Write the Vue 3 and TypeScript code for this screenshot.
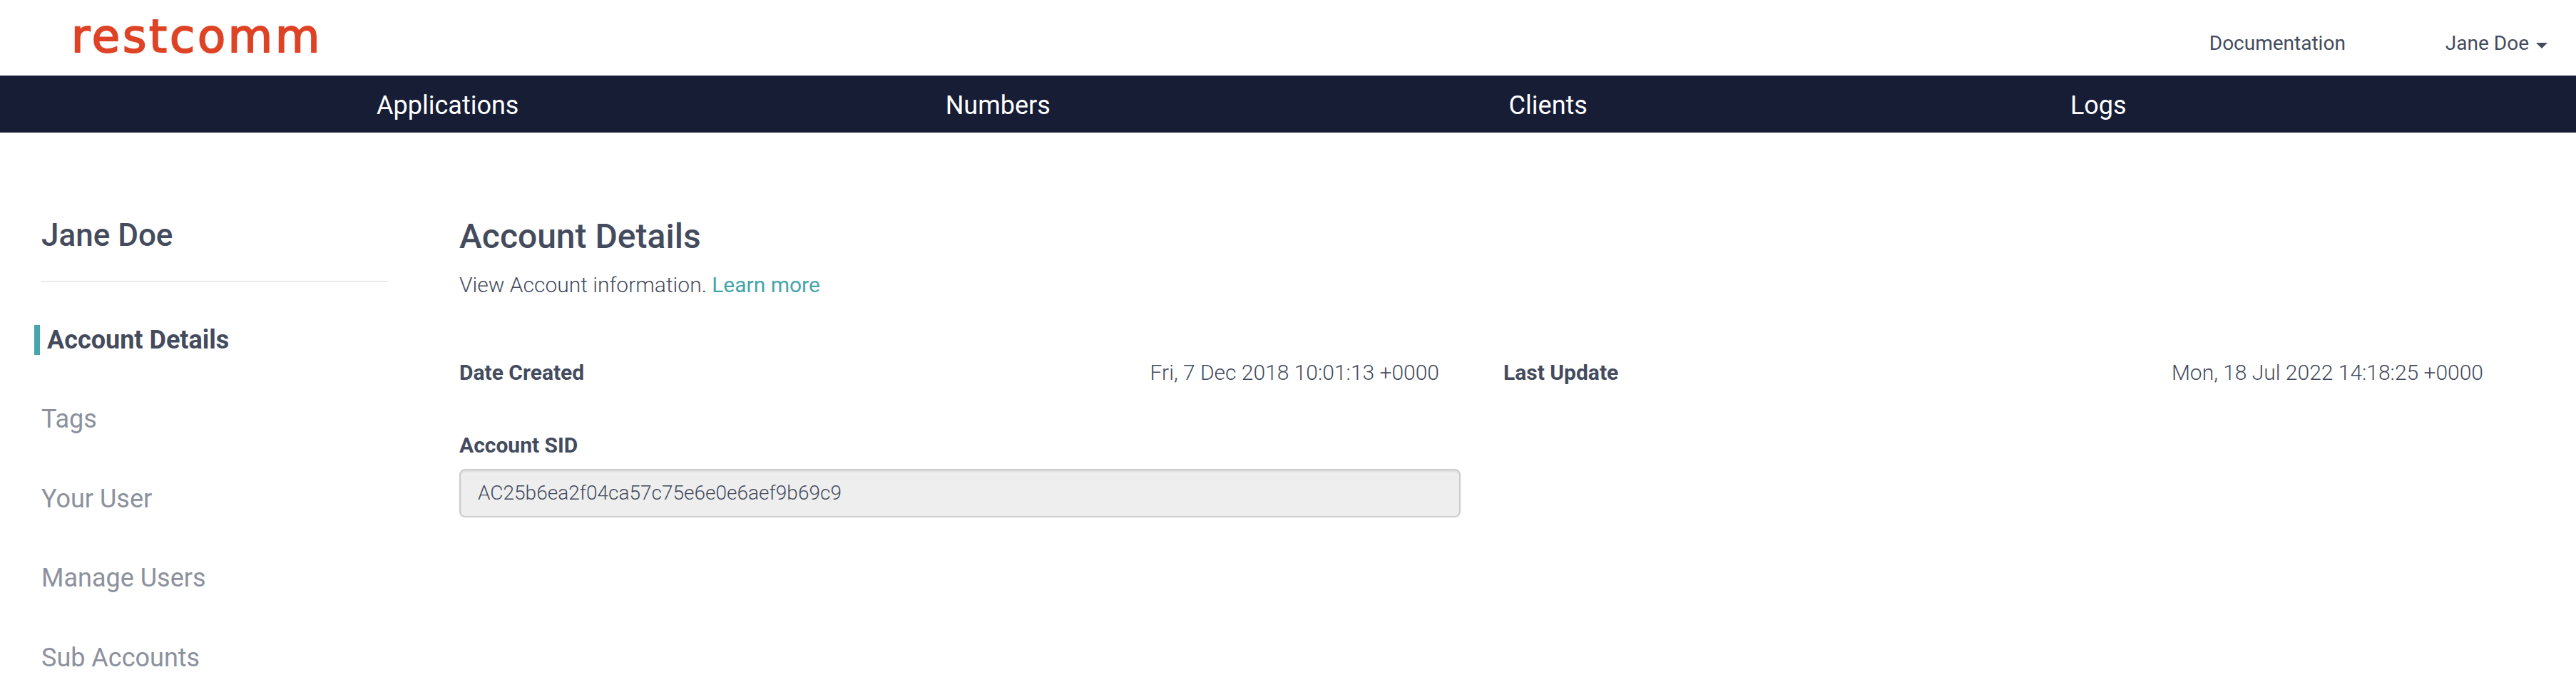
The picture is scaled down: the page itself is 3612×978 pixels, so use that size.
<script setup lang="ts">
interface NavItem { label: string }
interface SideItem { label: string; active?: boolean }
interface Fact { label: string; value: string }

const nav: NavItem[] = [{ label: 'Applications' }, { label: 'Numbers' }, { label: 'Clients' }, { label: 'Logs' }]
const side: SideItem[] = [
  { label: 'Account Details', active: true },
  { label: 'Tags' },
  { label: 'Your User' },
  { label: 'Manage Users' },
  { label: 'Sub Accounts' },
]
const facts: Fact[] = [
  { label: 'Date Created', value: 'Fri, 7 Dec 2018 10:01:13 +0000' },
  { label: 'Last Update', value: 'Mon, 18 Jul 2022 14:18:25 +0000' },
]
const userName = 'Jane Doe'
const accountSid = 'AC25b6ea2f04ca57c75e6e0e6aef9b69c9'
</script>

<template>
  <div class="page">
    <header class="top">
      <a class="brand">restcomm</a>
      <div class="links">
        <a>Documentation</a>
        <a class="user">{{ userName }}<i class="caret"></i></a>
      </div>
    </header>
    <nav class="nav">
      <a v-for="n in nav" :key="n.label">{{ n.label }}</a>
    </nav>
    <div class="body">
      <aside class="side">
        <h2>{{ userName }}</h2>
        <ul>
          <li v-for="s in side" :key="s.label" :class="{ active: s.active }">{{ s.label }}</li>
        </ul>
      </aside>
      <main class="main">
        <h1>Account Details</h1>
        <p class="lead">View Account information. <a>Learn more</a></p>
        <div class="facts">
          <div v-for="f in facts" :key="f.label" class="fact">
            <b>{{ f.label }}</b><span>{{ f.value }}</span>
          </div>
        </div>
        <label>Account SID</label>
        <div class="field">{{ accountSid }}</div>
      </main>
    </div>
  </div>
</template>

<style scoped>
.page { width: 100%; height: 978px; overflow: hidden; background: #fff; color: #444b5d; font-family: Roboto, "Liberation Sans", sans-serif; }
.top { height: 106px; display: flex; justify-content: space-between; box-sizing: border-box; padding: 0 40px 0 100px; }
.brand { color: #de4326; font-family: "DejaVu Sans", sans-serif; font-size: 64px; line-height: 103px; letter-spacing: 3.8px; -webkit-text-stroke: 2px #de4326; }
.links { display: flex; gap: 140px; padding-top: 41px; font-size: 28px; line-height: 40px; }
.user { display: flex; }
.caret { width: 0; height: 0; margin: 19px 0 0 10px; border: 8px solid transparent; border-top-color: #444b5d; border-bottom: 0; }
.nav { height: 80px; display: grid; grid-template-columns: repeat(4, 771.5px); padding-left: 242px; background: #161d35; box-shadow: inset 0 -1px #12182d; color: #fff; font-size: 36px; line-height: 84px; text-align: center; }
.body { display: flex; }
.side { width: 486px; padding: 118px 0 0 58px; }
h2 { margin: 0; height: 90px; font-size: 44px; line-height: 52px; font-weight: 500; border-bottom: 2px solid #ebebeb; }
ul { list-style: none; margin: 0; padding: 60px 0 0; }
li { font-size: 36px; line-height: 42px; margin-bottom: 69.4px; color: #8c919d; }
.active { margin-left: -10px; padding-left: 10px; border-left: 8px solid #46a5aa; color: #444b5d; font-weight: 700; }
.main { margin-left: 100px; padding-top: 118px; width: 2838px; font-weight: 300; font-size: 30px; }
h1 { margin: 0; font-size: 48px; line-height: 56px; font-weight: 500; }
.lead { margin: 18px 0 0; line-height: 44px; }
.lead a { color: #46a5aa; font-weight: 400; }
.facts { display: grid; grid-template-columns: 1374px 1374px; gap: 90px; margin-top: 79px; line-height: 44px; }
.fact { display: flex; justify-content: space-between; }
.fact b, label { font-weight: 700; }
label { display: block; margin-top: 58px; line-height: 44px; }
.field { margin-top: 11px; box-sizing: border-box; width: 1404px; height: 68px; border: 2px solid #ccc; border-radius: 8px; background: #eee; box-shadow: inset 0 2px 2px rgba(0, 0, 0, .075); padding-left: 24px; font-size: 28px; line-height: 64px; }
</style>
